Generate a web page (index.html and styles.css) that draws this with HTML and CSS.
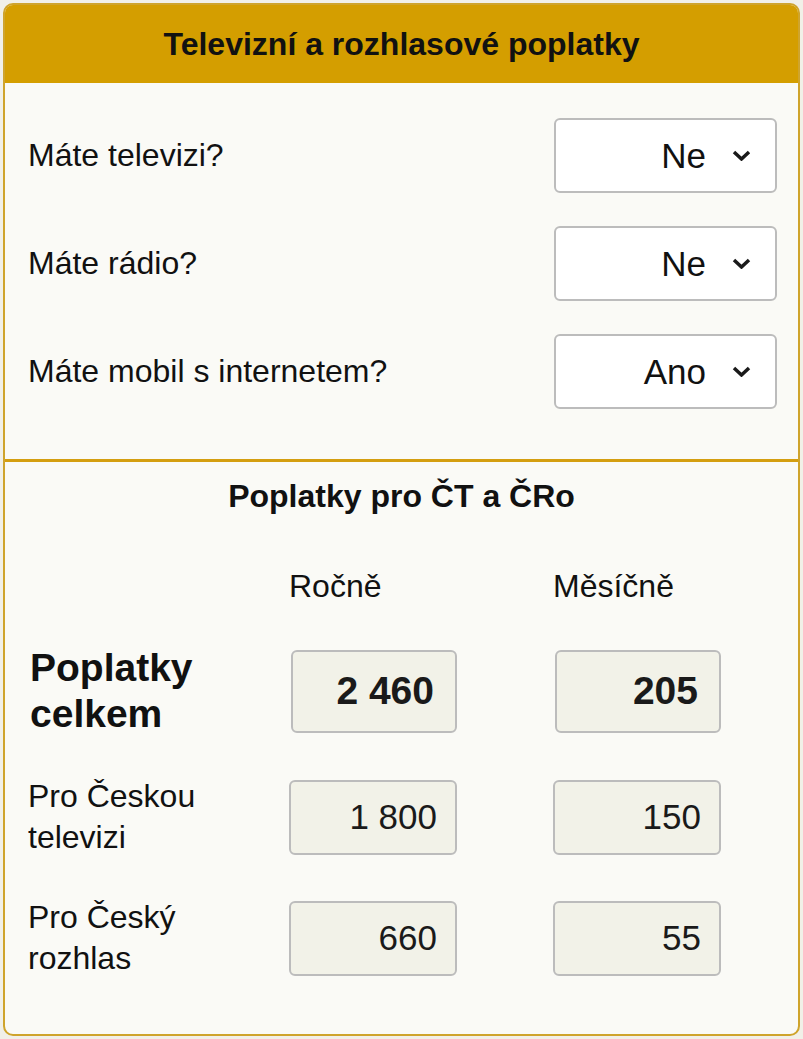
FILE: index.html
```html
<!DOCTYPE html>
<html lang="cs">
<head>
    <meta charset="UTF-8">
    <meta name="viewport" content="width=device-width, initial-scale=1.0">
    <title>Televizní a rozhlasové poplatky</title>
    <link rel="stylesheet" href="styles.css">
</head>
<body>
    <div class="card">
        <div class="card-head">Televizní a rozhlasové poplatky</div>

        <div class="questions">
            <div class="question">
                <span class="question-label">Máte televizi?</span>
                <div class="select">
                    <span>Ne</span>
                    <svg width="19" height="11" viewBox="0 0 19 11"><path d="M2 2 L9.5 9 L17 2" fill="none" stroke="#1a1a1a" stroke-width="3.5"/></svg>
                </div>
            </div>
            <div class="question">
                <span class="question-label">Máte rádio?</span>
                <div class="select">
                    <span>Ne</span>
                    <svg width="19" height="11" viewBox="0 0 19 11"><path d="M2 2 L9.5 9 L17 2" fill="none" stroke="#1a1a1a" stroke-width="3.5"/></svg>
                </div>
            </div>
            <div class="question">
                <span class="question-label">Máte mobil s internetem?</span>
                <div class="select">
                    <span>Ano</span>
                    <svg width="19" height="11" viewBox="0 0 19 11"><path d="M2 2 L9.5 9 L17 2" fill="none" stroke="#1a1a1a" stroke-width="3.5"/></svg>
                </div>
            </div>
        </div>

        <div class="fees">
            <h2>Poplatky pro ČT a ČRo</h2>

            <div class="fee-grid">
                <div></div>
                <div class="col-head">Ročně</div>
                <div class="col-head">Měsíčně</div>

                <div class="fee-label total">Poplatky celkem</div>
                <div class="value total">2 460</div>
                <div class="value total">205</div>

                <div class="fee-label">Pro Českou televizi</div>
                <div class="value">1 800</div>
                <div class="value">150</div>

                <div class="fee-label">Pro Český rozhlas</div>
                <div class="value">660</div>
                <div class="value">55</div>
            </div>
        </div>
    </div>
</body>
</html>
```

FILE: styles.css
```css
* {
    margin: 0;
    padding: 0;
    box-sizing: border-box;
    font-family: "Liberation Sans", Arial, sans-serif;
}

body {
    background: #f1f0e8;
    color: #111;
    padding: 3px;
}

.card {
    width: 797px;
    height: 1033px;
    background: #fafaf6;
    border: 2px solid #cfa42c;
    border-radius: 10px;
    overflow: hidden;
}

.card-head {
    height: 78px;
    background: #d49e00;
    display: flex;
    align-items: center;
    justify-content: center;
    font-size: 32px;
    font-weight: bold;
}

.questions {
    display: flex;
    flex-direction: column;
    gap: 33px;
    padding: 35px 21px 50px 23px;
    border-bottom: 3px solid #d49e10;
}

.question {
    display: flex;
    align-items: center;
    justify-content: space-between;
}

.question-label {
    font-size: 32px;
}

.select {
    width: 223px;
    height: 75px;
    background: #fff;
    border: 2px solid #bcbcbc;
    border-radius: 6px;
    display: flex;
    align-items: center;
    justify-content: flex-end;
    gap: 26px;
    padding-right: 24px;
    font-size: 35px;
}

.select svg {
    display: block;
}

.fees {
    padding: 16px 0 0 23px;
}

.fees h2 {
    text-align: center;
    font-size: 32px;
    line-height: 37px;
    margin-left: -23px;
    margin-bottom: 53px;
}

.fee-grid {
    display: grid;
    grid-template-columns: 261px 264px 168px;
    row-gap: 39px;
    align-items: center;
}

.col-head {
    font-size: 32px;
    line-height: 37px;
    margin-bottom: 1px;
}

.fee-label {
    max-width: 220px;
    font-size: 32px;
    line-height: 41px;
}

.fee-label.total {
    font-size: 39px;
    line-height: 46px;
    font-weight: bold;
    padding-left: 2px;
}

.value {
    width: 168px;
    height: 75px;
    background: #f2f2e8;
    border: 2px solid #bcbcbc;
    border-radius: 6px;
    display: flex;
    align-items: center;
    justify-content: flex-end;
    padding-right: 18px;
    font-size: 35px;
    color: #1a1a1a;
}

.value.total {
    width: 166px;
    height: 83px;
    margin-left: 2px;
    padding-right: 21px;
    font-size: 39px;
    font-weight: bold;
}
```
